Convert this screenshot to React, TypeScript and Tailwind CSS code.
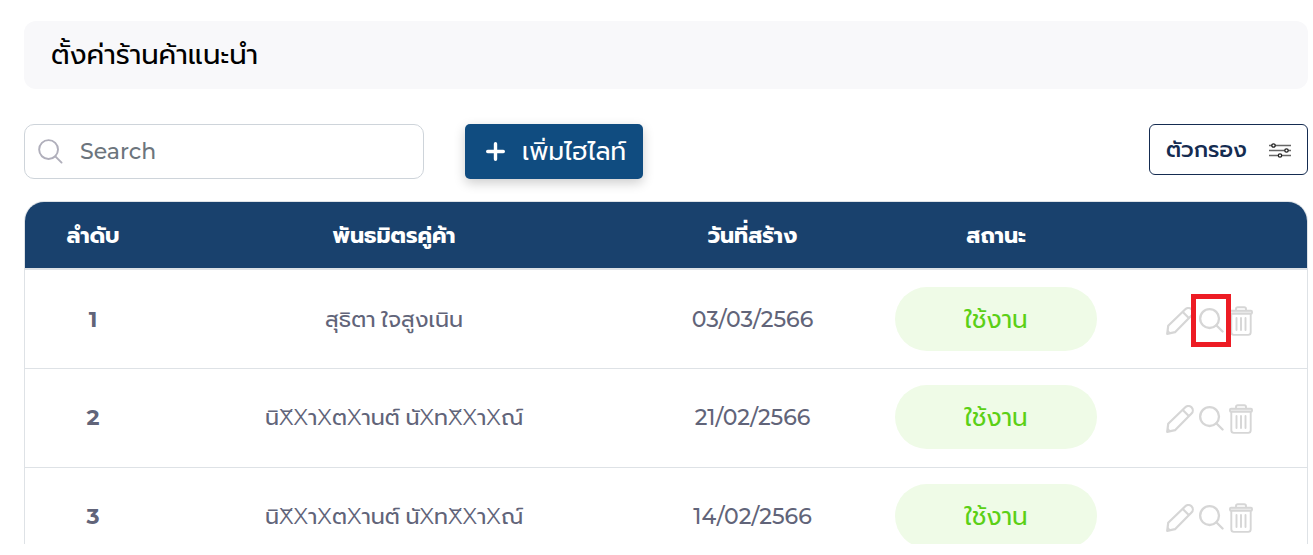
import React from "react";

const rows = [
  { no: 1, name: "สุธิตา ใจสูงเนิน", date: "03/03/2566", marked: true },
  { no: 2, name: "นิXิXาXตXานต์ นัXทXิXาXณ์", date: "21/02/2566", marked: false },
  { no: 3, name: "นิXิXาXตXานต์ นัXทXิXาXณ์", date: "14/02/2566", marked: false },
];

function SearchIcon({ className }: { className: string }) {
  return (
    <svg className={className} viewBox="0 0 26 26" fill="none" stroke="currentColor" strokeLinecap="round">
      <circle cx="11" cy="11" r="9.8" />
      <path d="M18 18l6.500 6.500" />
    </svg>
  );
}

function PencilIcon() {
  return (
    <svg className="h-7 w-7 shrink-0" viewBox="0 0 28 28" fill="none" stroke="#d6d6d6" strokeWidth="2.2" strokeLinejoin="round">
      <path d="M1.200 26.800l1-8L19.300 2.300a4.200 4.200 0 0 1 6.200 6.200L9 25.200z" />
      <path d="M16.800 5l6 6" />
      <path d="M1.500 23.500l3 3" strokeWidth="1.500" />
    </svg>
  );
}

function TrashIcon() {
  return (
    <svg className="h-[30px] w-6 shrink-0" viewBox="0 0 24 30" fill="none" stroke="#d6d6d6" strokeWidth="1.9" strokeLinejoin="round" strokeLinecap="round">
      <path d="M7 4.500V3q0-1.800 1.800-1.800h6.400Q17 1.200 17 3v1.500" />
      <path d="M2.300 8v18.300q0 2.600 2.600 2.600h14.200q2.600 0 2.600-2.600V8" />
      <rect x="1" y="4.800" width="22" height="3" rx="1" fill="#eeeeee" />
      <path d="M7.500 12v12M12 12v12M16.500 12v12" />
    </svg>
  );
}

function FilterIcon() {
  return (
    <svg className="mt-0.5 h-4 w-[22px]" viewBox="0 0 22 16" fill="#fff" stroke="#222" strokeWidth="1.3">
      <path d="M0 2.500h22M0 7.500h22M0 12.500h22" stroke="#666" strokeWidth="1.600" />
      <circle cx="4.500" cy="2.500" r="1.700" />
      <circle cx="17.500" cy="7.500" r="1.700" />
      <circle cx="11" cy="12.500" r="1.700" />
    </svg>
  );
}

export default function App() {
  return (
    <div className="h-[544px] w-[1308px] overflow-hidden bg-white pl-6 pt-[21px] font-['Montserrat','Prompt','Kanit','Noto_Sans_Thai',sans-serif] text-[#616479]">
      <header className="flex h-[68px] items-center rounded-xl bg-[#f8f8fa] pl-[27px] text-black">
        <h1 className="whitespace-nowrap text-[27.5px]">ตั้งค่าร้านค้าแนะนำ</h1>
      </header>
      <div className="mt-[35px] flex items-start">
        <label className="flex h-[55px] w-[400px] items-center rounded-[10px] border border-[#ced4da] pl-[13px]">
          <SearchIcon className="h-[25px] w-[25px] stroke-2 text-[#b0afbb]" />
          <input className="ml-[17px] w-72 text-[22px] font-medium text-[#6c757d] outline-none placeholder:text-[#6c757d]" placeholder="Search" />
        </label>
        <button className="ml-[41px] flex h-[55px] w-[178px] items-center rounded-[5px] bg-[#104c80] pl-[21px] text-white shadow-[0_4px_12px_rgba(0,0,0,0.2)]">
          <svg className="h-[19px] w-[19px]" viewBox="0 0 19 19" stroke="currentColor" strokeWidth="3.400" strokeLinecap="round">
            <path d="M9.500 1.700v15.600M1.700 9.500h15.600" />
          </svg>
          <span className="ml-[17px] whitespace-nowrap text-[24.7px]">เพิ่มไฮไลท์</span>
        </button>
        <button className="ml-auto flex h-[51px] w-[159px] items-center justify-between rounded-md border border-[#152c51] pl-4 pr-4 text-[#152c51]">
          <span className="whitespace-nowrap text-[22px] font-medium">ตัวกรอง</span>
          <FilterIcon />
        </button>
      </div>
      <main className="mt-[22px] h-[420px] overflow-hidden rounded-t-[20px] border border-[#dee2e6]">
        <table className="w-full table-fixed border-collapse text-center">
          <colgroup>
            <col className="w-[136px]" />
            <col className="w-[466px]" />
            <col className="w-[250px]" />
            <col className="w-[238px]" />
            <col className="w-[192px]" />
          </colgroup>
          <thead className="bg-[#19416d] text-[22px] text-white">
            <tr className="h-[67px] border-b-2 border-[#dee2e6]">
              <th>ลำดับ</th>
              <th>พันธมิตรคู่ค้า</th>
              <th className="pl-px">วันที่สร้าง</th>
              <th>สถานะ</th>
              <th />
            </tr>
          </thead>
          <tbody className="text-[22px]">
            {rows.map((row) => (
              <tr key={row.no} className="h-[99px] border-b border-[#dee2e6] first:*:pt-px">
                <td className="font-bold">{row.no}</td>
                <td className="whitespace-nowrap text-[22.2px]">{row.name}</td>
                <td className="pl-px font-medium">{row.date}</td>
                <td className="pb-px">
                  <span className="mx-auto flex h-16 w-[202px] items-center justify-center rounded-full bg-[#effbe7] pt-px text-[24.7px] text-[#5bd016]">ใช้งาน</span>
                </td>
                <td>
                  <div className="relative flex items-center justify-center gap-[5px] pr-[4px] pt-[3px]">
                    <PencilIcon />
                    <SearchIcon className="-mt-px h-[25px] w-[25px] shrink-0 stroke-[2.4px] text-[#d6d6d6]" />
                    <TrashIcon />
                    {row.marked && <span className="absolute -top-[9px] left-[76px] h-[53px] w-10 border-[5px] border-[#ed1c24]" />}
                  </div>
                </td>
              </tr>
            ))}
          </tbody>
        </table>
      </main>
    </div>
  );
}
